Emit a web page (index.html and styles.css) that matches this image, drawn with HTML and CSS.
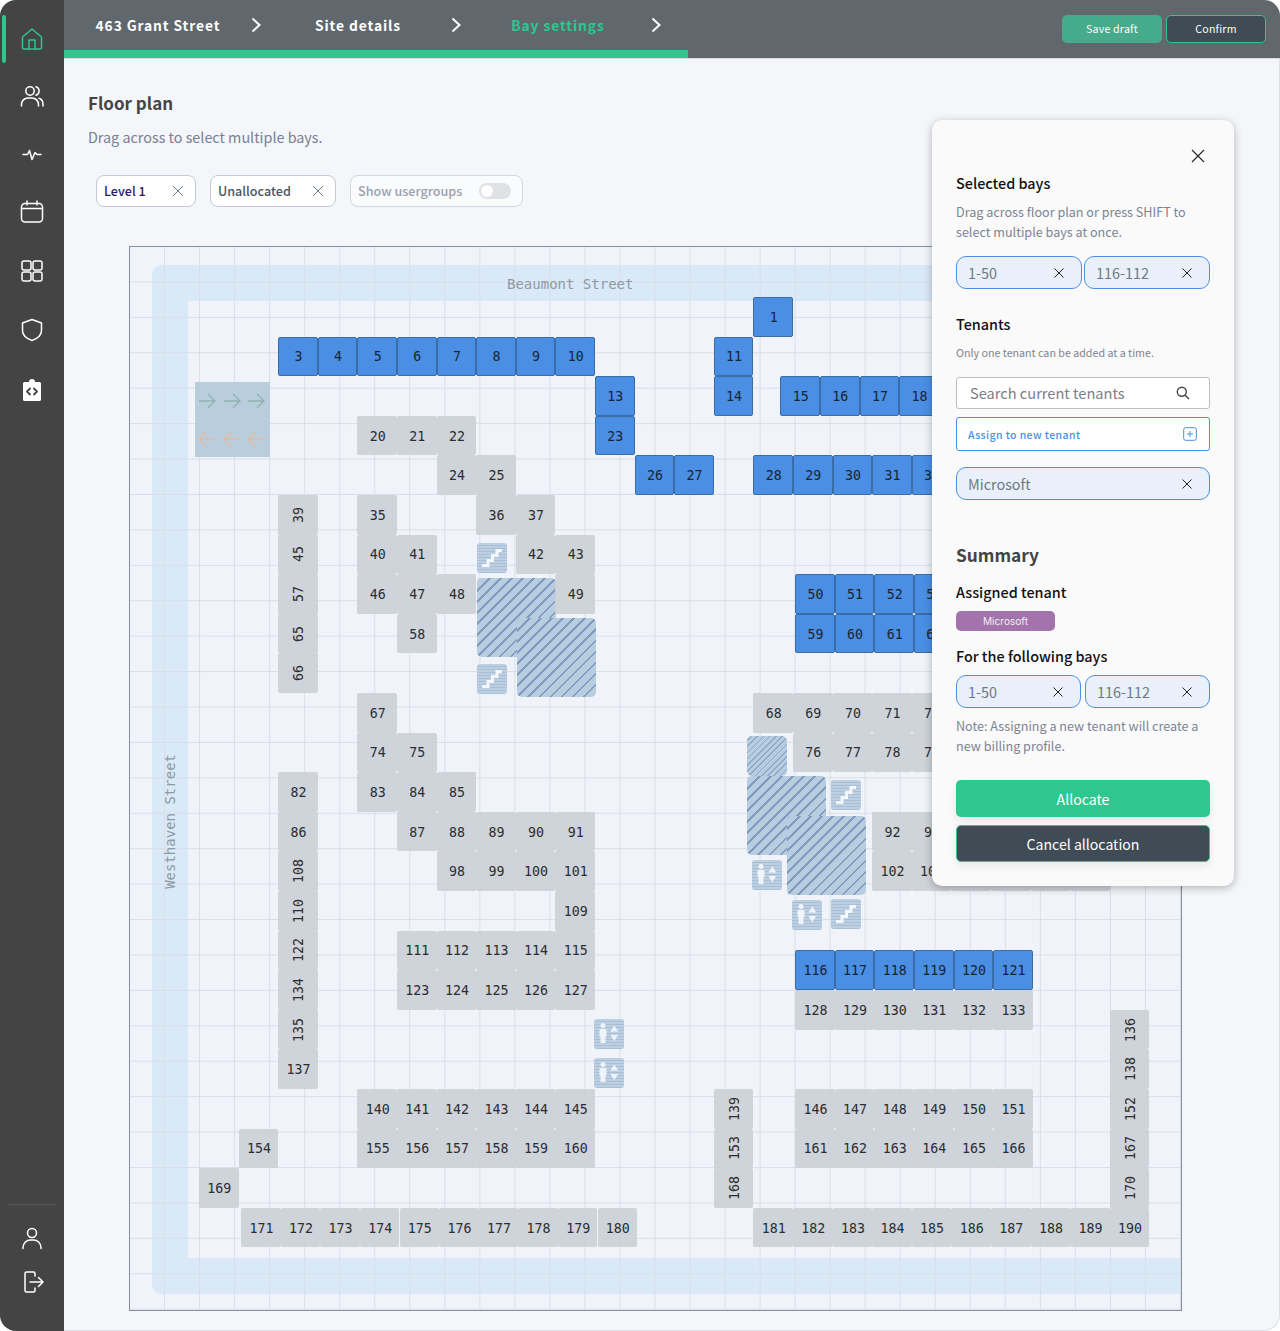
FILE: index.html
```html
<!DOCTYPE html>
<html lang="en">
<head>
  <meta charset="UTF-8">
  <meta name="viewport" content="width=device-width, initial-scale=1.0">
  <title>Floor plan</title>
  <link rel="stylesheet" href="styles.css">
</head>
<body>
  <div class="app">
    <!-- Sidebar -->
    <nav class="sidebar">
      <a class="nav-item active">
        <svg class="icon" viewBox="0 0 24 24"><path d="M2.5 10 12 2l9.5 8v10a2 2 0 0 1-2 2h-15a2 2 0 0 1-2-2z"/><path d="M9 22v-9h6v9"/></svg>
      </a>
      <a class="nav-item users">
        <svg class="icon" viewBox="0 0 24 24"><circle cx="10" cy="7" r="4.2"/><path d="M1.5 22v-1.5A6.5 6.5 0 0 1 8 14h4a6.5 6.5 0 0 1 6.5 6.5V22"/><path d="M16 2.8a4.4 4.4 0 0 1 0 8.4"/><path d="M19 14.3a6.2 6.2 0 0 1 4 6V22"/></svg>
      </a>
      <a class="nav-item">
        <svg class="icon" viewBox="0 0 24 24"><path d="M3 12.5h4.5l2-4 2.5 9 3-7 2 2H21"/></svg>
      </a>
      <a class="nav-item">
        <svg class="icon" viewBox="0 0 24 24"><rect x="1.5" y="3.5" width="21" height="18.5" rx="3.5"/><path d="M1.5 8.5h21M7 1v4M17 1v4"/></svg>
      </a>
      <a class="nav-item lower">
        <svg class="icon" viewBox="0 0 24 24"><rect x="2" y="2" width="9" height="9" rx="2"/><rect x="13" y="2" width="9" height="9" rx="2"/><rect x="2" y="13" width="9" height="9" rx="2"/><rect x="13" y="13" width="9" height="9" rx="2"/></svg>
      </a>
      <a class="nav-item lower">
        <svg class="icon" viewBox="0 0 24 24"><path d="M12 1.5 21.5 5v7.5c0 4.8-3.8 8-9.5 10-5.7-2-9.5-5.2-9.5-10V5z"/></svg>
      </a>
      <a class="nav-item code">
        <svg class="icon" viewBox="0 0 24 24"><path class="solid" d="M4.5 4H9a3 3 0 0 1 6 0h4.5A1.5 1.5 0 0 1 21 5.5v16a1.5 1.5 0 0 1-1.5 1.5h-15A1.5 1.5 0 0 1 3 21.5v-16A1.5 1.5 0 0 1 4.5 4z"/><path class="cut" d="M10 10.5 7 13.5l3 3M14 10.5l3 3-3 3"/></svg>
      </a>
      <div class="sidebar-bottom">
        <a class="nav-item">
          <svg class="icon" viewBox="0 0 24 24"><circle cx="12" cy="7" r="4.5"/><path d="M3 22.5v-1A7.5 7.5 0 0 1 10.5 14h3a7.5 7.5 0 0 1 7.5 7.5v1"/></svg>
        </a>
        <a class="nav-item">
          <svg class="icon" viewBox="0 0 24 24"><path d="M15 6V3.5A1.5 1.5 0 0 0 13.5 2h-7A1.5 1.5 0 0 0 5 3.5v17A1.5 1.5 0 0 0 6.5 22h7a1.5 1.5 0 0 0 1.5-1.5V18"/><path d="M10 12h13M18.5 7.5 23 12l-4.5 4.5"/></svg>
        </a>
      </div>
    </nav>

    <div class="content">
      <!-- Header with steps -->
      <header class="topbar">
        <div class="steps">
          <div class="step"><span class="step-name">463 Grant Street</span><svg class="chevron" viewBox="0 0 10 16"><path d="M1.5 1.5 8.5 8l-7 6.5"/></svg></div>
          <div class="step"><span class="step-name">Site details</span><svg class="chevron" viewBox="0 0 10 16"><path d="M1.5 1.5 8.5 8l-7 6.5"/></svg></div>
          <div class="step current"><span class="step-name">Bay settings</span><svg class="chevron" viewBox="0 0 10 16"><path d="M1.5 1.5 8.5 8l-7 6.5"/></svg></div>
        </div>
        <div class="top-actions">
          <button class="top-btn save">Save draft</button>
          <button class="top-btn confirm">Confirm</button>
        </div>
      </header>
      <div class="progress"><div class="progress-fill"></div></div>

      <main class="main">
        <h1 class="page-title">Floor plan</h1>
        <p class="page-sub">Drag across to select multiple bays.</p>

        <div class="filters">
          <div class="filter level">
            <span>Level 1</span>
            <svg class="x" viewBox="0 0 12 12"><path d="M1 1l10 10M11 1 1 11"/></svg>
          </div>
          <div class="filter unallocated">
            <span>Unallocated</span>
            <svg class="x" viewBox="0 0 12 12"><path d="M1 1l10 10M11 1 1 11"/></svg>
          </div>
          <div class="filter usergroups">
            <span>Show usergroups</span>
            <span class="toggle"><span class="knob"></span></span>
          </div>
        </div>

        <div class="plan" id="plan">
          <div class="road"></div>
          <div class="grid-lines"></div>
          <div class="street beaumont">Beaumont Street</div>
          <div class="street westhaven">Westhaven Street</div>

          <div class="ramp">
            <div class="ramp-row in">
              <svg viewBox="0 0 18 16"><path d="M1 8h16M10 1l7 7-7 7"/></svg>
              <svg viewBox="0 0 18 16"><path d="M1 8h16M10 1l7 7-7 7"/></svg>
              <svg viewBox="0 0 18 16"><path d="M1 8h16M10 1l7 7-7 7"/></svg>
            </div>
            <div class="ramp-row out">
              <svg viewBox="0 0 18 16"><path d="M17 8H1M8 1 1 8l7 7"/></svg>
              <svg viewBox="0 0 18 16"><path d="M17 8H1M8 1 1 8l7 7"/></svg>
              <svg viewBox="0 0 18 16"><path d="M17 8H1M8 1 1 8l7 7"/></svg>
            </div>
          </div>

          <div class="void v1"></div>
          <div class="void v2"></div>
          <div class="void v3"></div>
          <div class="void v4"></div>
          <div class="void small v5"></div>

          <div class="feature s1"><svg viewBox="0 0 30 30"><path class="steps-line" d="M5 22.5h6v-5h4.5v-5H20v-5h5"/></svg></div>
          <div class="feature s2"><svg viewBox="0 0 30 30"><path class="steps-line" d="M5 22.5h6v-5h4.5v-5H20v-5h5"/></svg></div>
          <div class="feature s3"><svg viewBox="0 0 30 30"><path class="steps-line" d="M5 22.5h6v-5h4.5v-5H20v-5h5"/></svg></div>
          <div class="feature s4"><svg viewBox="0 0 30 30"><path class="steps-line" d="M5 22.5h6v-5h4.5v-5H20v-5h5"/></svg></div>
          <div class="feature l1"><svg viewBox="0 0 30 30"><circle class="lift" cx="9" cy="6.5" r="2.5"/><path class="lift" d="M5.5 10h7v7.5h-1V24h-5v-6.5h-1zM20.3 6.5l4 6h-8zM20.3 22l-4-6h8z"/></svg></div>
          <div class="feature l2"><svg viewBox="0 0 30 30"><circle class="lift" cx="9" cy="6.5" r="2.5"/><path class="lift" d="M5.5 10h7v7.5h-1V24h-5v-6.5h-1zM20.3 6.5l4 6h-8zM20.3 22l-4-6h8z"/></svg></div>
          <div class="feature l3"><svg viewBox="0 0 30 30"><circle class="lift" cx="9" cy="6.5" r="2.5"/><path class="lift" d="M5.5 10h7v7.5h-1V24h-5v-6.5h-1zM20.3 6.5l4 6h-8zM20.3 22l-4-6h8z"/></svg></div>
          <div class="feature l4"><svg viewBox="0 0 30 30"><circle class="lift" cx="9" cy="6.5" r="2.5"/><path class="lift" d="M5.5 10h7v7.5h-1V24h-5v-6.5h-1zM20.3 6.5l4 6h-8zM20.3 22l-4-6h8z"/></svg></div>
        </div>
      </main>
    </div>

    <!-- Allocation panel -->
    <aside class="panel">
      <div class="panel-close">
        <svg viewBox="0 0 14 14"><path d="M1 1l12 12M13 1 1 13"/></svg>
      </div>
      <h3 class="panel-heading">Selected bays</h3>
      <p class="panel-text">Drag across floor plan or press SHIFT to select multiple bays at once.</p>
      <div class="chips first">
        <div class="chip"><span>1-50</span><svg class="x" viewBox="0 0 10 10"><path d="M.5.5l9 9M9.5.5l-9 9"/></svg></div>
        <div class="chip"><span>116-112</span><svg class="x" viewBox="0 0 10 10"><path d="M.5.5l9 9M9.5.5l-9 9"/></svg></div>
      </div>

      <h3 class="panel-heading tenants">Tenants</h3>
      <p class="panel-hint">Only one tenant can be added at a time.</p>
      <div class="search">
        <span>Search current tenants</span>
        <svg viewBox="0 0 14 14"><circle cx="5.8" cy="5.8" r="4.5"/><path d="M9.2 9.2 13 13"/></svg>
      </div>
      <div class="assign">
        <span>Assign to new tenant</span>
        <svg viewBox="0 0 14 14"><rect x=".7" y=".7" width="12.6" height="12.6" rx="2"/><path d="M7 4v6M4 7h6"/></svg>
      </div>
      <div class="chip wide"><span>Microsoft</span><svg class="x" viewBox="0 0 10 10"><path d="M.5.5l9 9M9.5.5l-9 9"/></svg></div>

      <h2 class="summary-title">Summary</h2>
      <h3 class="panel-heading assigned">Assigned tenant</h3>
      <div class="tenant-pill">Microsoft</div>
      <h3 class="panel-heading following">For the following bays</h3>
      <div class="chips second">
        <div class="chip"><span>1-50</span><svg class="x" viewBox="0 0 10 10"><path d="M.5.5l9 9M9.5.5l-9 9"/></svg></div>
        <div class="chip"><span>116-112</span><svg class="x" viewBox="0 0 10 10"><path d="M.5.5l9 9M9.5.5l-9 9"/></svg></div>
      </div>
      <p class="panel-text note">Note: Assigning a new tenant will create a new billing profile.</p>
      <button class="panel-btn allocate">Allocate</button>
      <button class="panel-btn cancel">Cancel allocation</button>
    </aside>
  </div>

  <script src="bays.js"></script>
</body>
</html>
```

FILE: styles.css
```css
* {
  box-sizing: border-box;
}
html, body {
  margin: 0;
  padding: 0;
  background-color: #ffffff;
}
body {
  font-family: "Noto Sans CJK JP", "Noto Sans", sans-serif;
}
h1, h2, h3, p {
  margin: 0;
}
button {
  font-family: inherit;
  cursor: pointer;
}
.app {
  position: relative;
  display: flex;
  width: 1280px;
  height: 1331px;
  border-radius: 16px;
  overflow: hidden;
  background-color: #f4f6fa;
  box-shadow: inset 0 0 0 1px #dcdfe4;
}

/* Sidebar */
.sidebar {
  width: 64px;
  flex-shrink: 0;
  display: flex;
  flex-direction: column;
  align-items: center;
  gap: 34px;
  padding: 27px 0 37px;
  background-color: #444444;
}
.nav-item {
  position: relative;
  display: block;
  width: 24px;
  height: 24px;
}
.nav-item.users {
  margin-top: -1px;
}
.nav-item.lower {
  margin-top: 1px;
}
.nav-item.code {
  margin-top: 2px;
}
.nav-item.active::before {
  content: "";
  position: absolute;
  left: -18px;
  top: -12px;
  width: 4px;
  height: 48px;
  border-radius: 2px;
  background-color: #2dc78f;
}
.icon {
  display: block;
  width: 24px;
  height: 24px;
  fill: none;
  stroke: #ffffff;
  stroke-width: 1.5;
  stroke-linecap: round;
  stroke-linejoin: round;
}
.nav-item.active .icon {
  stroke: #2dc78f;
}
.icon .solid {
  fill: #ffffff;
  stroke: none;
}
.icon .cut {
  stroke: #444444;
  stroke-width: 1.8;
}
.sidebar-bottom {
  margin-top: auto;
  width: 48px;
  display: flex;
  flex-direction: column;
  align-items: center;
  gap: 20px;
  padding-top: 21px;
  border-top: 1px solid #585858;
}

/* Header */
.content {
  flex: 1;
  min-width: 0;
}
.topbar {
  height: 50px;
  display: flex;
  justify-content: space-between;
  background-color: #60686e;
}
.steps {
  display: flex;
}
.step {
  width: 200px;
  height: 50px;
  display: flex;
  align-items: center;
  padding: 0 0 1px 1px;
}
.step-name {
  flex: 1;
  text-align: center;
  color: #ffffff;
  font-size: 13.8px;
  font-weight: 700;
  letter-spacing: 0.9px;
}
.step.current .step-name {
  color: #2dc78f;
}
.chevron {
  width: 10px;
  height: 16px;
  margin-right: 3px;
  fill: none;
  stroke: #ffffff;
  stroke-width: 2;
}
.top-actions {
  display: flex;
  gap: 4px;
  padding: 15px 14px 0 0;
}
.top-btn {
  width: 100px;
  height: 28px;
  padding: 0 0 2px;
  border-radius: 5px;
  font-size: 10.6px;
  color: #ffffff;
  letter-spacing: 0.2px;
}
.top-btn.save {
  border: none;
  background-color: #45ab8b;
}
.top-btn.confirm {
  border: 1px solid #2dc78f;
  background-color: #3f4c55;
}
.progress {
  height: 8px;
  background-color: #60686e;
  box-shadow: 0 1px 0 #d9dce0;
}
.progress-fill {
  width: 624px;
  height: 8px;
  background-color: #2dc78f;
}

/* Main */
.main {
  padding: 30px 0 0 24px;
}
.page-title {
  font-size: 17px;
  line-height: 30px;
  font-weight: 700;
  color: #444444;
}
.page-sub {
  margin-top: 7px;
  font-size: 14.35px;
  line-height: 24px;
  color: #768094;
}
.filters {
  display: flex;
  gap: 14px;
  margin: 26px 0 0 8px;
}
.filter {
  height: 32px;
  display: flex;
  align-items: center;
  justify-content: space-between;
  padding: 0 11px 1px 7px;
  border: 1px solid #c4c9d8;
  border-radius: 8px;
  background-color: #ffffff;
  font-size: 12.6px;
  font-weight: 500;
  color: #4a5563;
}
.filter.level {
  width: 100px;
  color: #2c1a6b;
}
.filter.unallocated {
  width: 126px;
}
.filter.usergroups {
  width: 173px;
  border-color: #d3d6e0;
  background-color: #fafbfd;
  color: #9aa2b0;
}
.x {
  width: 12px;
  height: 12px;
  fill: none;
  stroke: #6f7885;
  stroke-width: 1;
}
.toggle {
  width: 32px;
  height: 16px;
  padding: 2px;
  border-radius: 8px;
  background-color: #dfe1e5;
}
.knob {
  display: block;
  width: 12px;
  height: 12px;
  border-radius: 50%;
  background-color: #ffffff;
}

/* Floor plan canvas */
.plan {
  position: relative;
  width: 1053px;
  height: 1065px;
  margin: 39px 0 0 41px;
  border: 1px solid #84909c;
  background-color: #f0f3f9;
}
.road {
  position: absolute;
  left: 22px;
  top: 18px;
  right: 0;
  height: 1029px;
  border: 36px solid #dae9f8;
  border-right: none;
  border-radius: 10px 0 0 10px;
}
.grid-lines {
  position: absolute;
  inset: 0;
  background-image:
    linear-gradient(to left, #d9dee6 1px, transparent 1px),
    linear-gradient(to top, #d9dee6 1px, transparent 1px);
  background-size: calc(100% / 30) calc(100% / 30);
}
.street {
  position: absolute;
  font-family: "DejaVu Sans Mono", monospace;
  font-size: 14px;
  line-height: 18px;
  color: #8e99a5;
}
.beaumont {
  left: 377px;
  top: 28px;
}
.westhaven {
  left: 31px;
  top: 507px;
  writing-mode: vertical-rl;
  transform: rotate(180deg);
}
.ramp {
  position: absolute;
  left: 65px;
  top: 135px;
  width: 75px;
  height: 75px;
  padding: 11px 5px 11px 3px;
  display: flex;
  flex-direction: column;
  gap: 22px;
  background-color: #b9cddd;
}
.ramp-row {
  display: flex;
  justify-content: space-between;
  fill: none;
}
.ramp-row svg {
  width: 18px;
  height: 16px;
  stroke-width: 1.3;
}
.ramp-row.in svg {
  stroke: #8fb3ae;
}
.ramp-row.out svg {
  stroke: #e3bb9f;
}
.void {
  position: absolute;
  width: 79px;
  height: 79px;
  border-radius: 5px;
  background-image: repeating-linear-gradient(-45deg, #7f9bbf 0 2px, #b9cde0 2px 7.8px);
}
.void.small {
  width: 40px;
  height: 40px;
  background-image: repeating-linear-gradient(-45deg, #8fa9c8 0 1.2px, #b9cde0 1.2px 4.4px);
}
.v1 { left: 347px; top: 331px; }
.v2 { left: 387px; top: 371px; }
.v3 { left: 617px; top: 529px; }
.v4 { left: 657px; top: 569px; }
.v5 { left: 617px; top: 489px; }
.feature {
  position: absolute;
  width: 30px;
  height: 30px;
  border-radius: 3px;
  background-image: repeating-linear-gradient(0deg, #a8bfd7 0 1px, #bdd0e2 1px 3px);
}
.feature svg {
  display: block;
  width: 30px;
  height: 30px;
}
.steps-line {
  fill: none;
  stroke: #f4f7fb;
  stroke-width: 3;
}
.lift {
  fill: #f0f4f9;
}
.s1 { left: 347px; top: 296px; }
.s2 { left: 347px; top: 417px; }
.s3 { left: 701px; top: 533px; }
.s4 { left: 701px; top: 652px; }
.l1 { left: 622px; top: 613px; }
.l2 { left: 662px; top: 653px; }
.l3 { left: 464px; top: 772px; }
.l4 { left: 464px; top: 811px; }
.bay {
  position: absolute;
  width: 39.6px;
  height: 39.6px;
  padding: 1px 0 0 1px;
  display: flex;
  align-items: center;
  justify-content: center;
  border-radius: 2px;
  background-color: rgba(204, 208, 215, 0.92);
  font-family: "DejaVu Sans Mono", monospace;
  font-size: 13.3px;
  color: #2a2d31;
}
.bay.selected {
  border: 1px solid #3a6da6;
  background-color: #4a8fe3;
  color: #1a2430;
}
.bay.turned {
  padding: 0 0 0 2px;
}
.bay.turned span {
  writing-mode: vertical-rl;
  transform: rotate(180deg);
}

/* Panel */
.panel {
  position: absolute;
  left: 932px;
  top: 120px;
  width: 302px;
  height: 766px;
  padding: 24px;
  border-radius: 10px;
  background-color: #fafafa;
  box-shadow: 0 2px 8px rgba(0, 0, 0, 0.28);
}
.panel-close {
  display: flex;
  justify-content: flex-end;
  height: 27px;
  padding: 5px 5px 0 0;
}
.panel-close svg {
  width: 14px;
  height: 14px;
  fill: none;
  stroke: #222222;
  stroke-width: 1.1;
}
.panel-heading {
  font-size: 14.4px;
  line-height: 24px;
  font-weight: 500;
  color: #111111;
}
.panel-text {
  margin-top: 7px;
  font-size: 12.6px;
  line-height: 20px;
  color: #7a8494;
}
.chips {
  display: flex;
  justify-content: space-between;
}
.chips.first {
  margin-top: 14px;
}
.chips.second {
  margin-top: 7px;
}
.chip {
  width: 126px;
  height: 33px;
  display: flex;
  align-items: center;
  justify-content: space-between;
  padding: 0 17px 0 11px;
  border: 1px solid #4a8fe3;
  border-radius: 10px;
  background-color: #e9f0fa;
  font-size: 14.4px;
  color: #6f7885;
}
.chips.second .chip {
  width: 125px;
}
.chip .x {
  width: 10px;
  height: 10px;
  stroke: #222222;
}
.chip.wide {
  width: 100%;
  margin-top: 16px;
}
.panel-heading.tenants {
  margin-top: 23px;
}
.panel-hint {
  margin-top: 7px;
  font-size: 10.7px;
  line-height: 20px;
  color: #7a8494;
}
.search {
  height: 32px;
  margin-top: 14px;
  display: flex;
  align-items: center;
  justify-content: space-between;
  padding: 0 19px 1px 13px;
  border: 1px solid #b9bec6;
  border-radius: 3px;
  background-color: #ffffff;
  font-size: 14.6px;
  color: #7a8089;
}
.search svg {
  width: 14px;
  height: 14px;
  fill: none;
  stroke: #444444;
  stroke-width: 1.4;
}
.assign {
  height: 34px;
  margin-top: 8px;
  display: flex;
  align-items: center;
  justify-content: space-between;
  padding: 0 12px 0 11px;
  border: 1px solid #4a8fe3;
  border-radius: 3px;
  background-color: #ffffff;
  font-size: 10.5px;
  font-weight: 500;
  letter-spacing: 0.4px;
  color: #4a8fe3;
}
.assign svg {
  width: 14px;
  height: 14px;
  fill: none;
  stroke: #4a8fe3;
  stroke-width: 1;
}
.summary-title {
  margin-top: 40px;
  font-size: 17.3px;
  line-height: 30px;
  font-weight: 700;
  color: #444444;
}
.panel-heading.assigned {
  margin-top: 10px;
}
.tenant-pill {
  width: 99px;
  height: 20px;
  margin-top: 7px;
  border-radius: 5px;
  background-color: #a373ab;
  color: #f4ecf6;
  font-family: Inter, sans-serif;
  font-size: 10.1px;
  line-height: 20px;
  text-align: center;
}
.panel-heading.following {
  margin-top: 13px;
}
.panel-text.note {
  margin-top: 8px;
}
.panel-btn {
  display: block;
  width: 100%;
  height: 37px;
  margin-top: 8px;
  border-radius: 5px;
  font-size: 14.1px;
  color: #ffffff;
  box-shadow: 0 4px 8px rgba(0, 0, 0, 0.08);
}
.panel-btn.allocate {
  margin-top: 24px;
  border: none;
  background-color: #2dc78f;
}
.panel-btn.cancel {
  border: 1px solid #2dc78f;
  background-color: #3f4c55;
}
```

FILE: bays.js
```js
document.addEventListener("DOMContentLoaded", () => {
  const plan = document.getElementById("plan");
  const pitch = 39.6;
  const originX = 148.2;
  const originY = 50;

  // [first bay, last bay, column, row, x nudge]
  const selected = [
    [1, 1, 12, 0], [3, 10, 0, 1], [11, 11, 11, 1], [13, 13, 8, 2], [14, 14, 11, 2],
    [15, 18, 12, 2, 27], [23, 23, 8, 3], [26, 27, 9, 4], [28, 32, 12, 4],
    [50, 53, 13, 7, 2.2], [59, 62, 13, 8, 2.2], [116, 121, 13, 16.5, 2.2],
  ];
  const plain = [
    [20, 22, 2, 3], [24, 25, 4, 4], [35, 35, 2, 5], [36, 37, 5, 5], [40, 41, 2, 6],
    [42, 43, 6, 6], [46, 48, 2, 7], [49, 49, 7, 7], [58, 58, 3, 8], [67, 67, 2, 10],
    [68, 72, 12, 10], [74, 75, 2, 11], [76, 79, 13, 11], [82, 82, 0, 12], [83, 85, 2, 12],
    [86, 86, 0, 13], [87, 91, 3, 13], [92, 93, 15, 13], [98, 101, 4, 14], [102, 107, 15, 14],
    [109, 109, 7, 15], [111, 115, 3, 16], [123, 127, 3, 17], [128, 133, 13, 17.5, 2.2],
    [137, 137, 0, 19], [140, 145, 2, 20], [146, 151, 13, 20, 2.2], [154, 154, -1, 21],
    [155, 160, 2, 21], [161, 166, 13, 21, 2.2], [169, 169, -2, 22],
    [171, 180, -1, 23, 2.5], [181, 190, 12, 23],
  ];
  // [bay, column, row]
  const turned = [
    [39, 0, 5], [45, 0, 6], [57, 0, 7], [65, 0, 8], [66, 0, 9],
    [108, 0, 14], [110, 0, 15], [122, 0, 16], [134, 0, 17], [135, 0, 18],
    [139, 11, 20], [153, 11, 21], [168, 11, 22],
    [136, 21, 18], [138, 21, 19], [152, 21, 20], [167, 21, 21], [170, 21, 22],
  ];

  const addBay = (number, col, row, nudge, className) => {
    const bay = document.createElement("div");
    bay.className = className;
    bay.style.left = `${originX + pitch * col + nudge}px`;
    bay.style.top = `${originY + pitch * row}px`;
    bay.innerHTML = `<span>${number}</span>`;
    plan.appendChild(bay);
  };

  const addRun = (run, className) => {
    const [first, last, col, row, nudge = 0] = run;
    for (let n = first; n <= last; n++) {
      addBay(n, col + n - first, row, nudge, className);
    }
  };

  plain.forEach((run) => addRun(run, "bay"));
  turned.forEach(([n, col, row]) => addBay(n, col, row, 0, "bay turned"));
  selected.forEach((run) => addRun(run, "bay selected"));
});
```
